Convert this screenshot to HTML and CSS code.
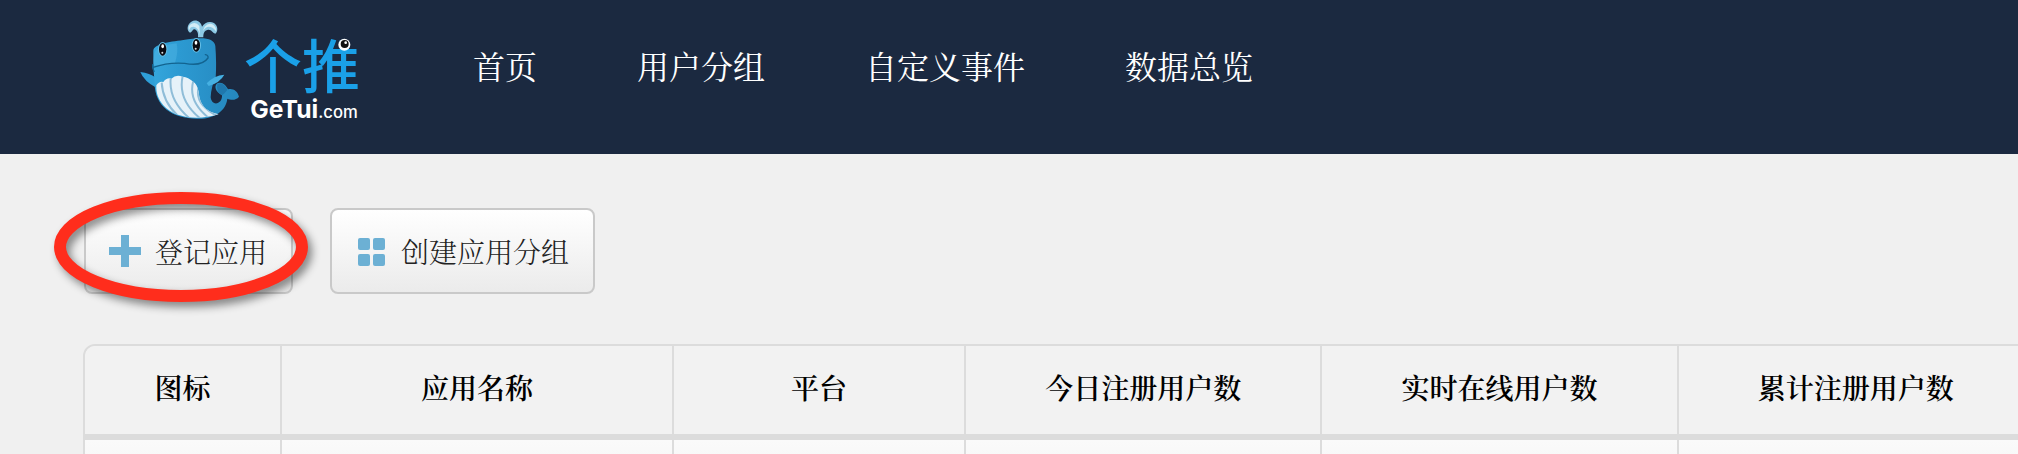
FILE: index.html
```html
<!DOCTYPE html>
<html lang="zh-CN">
<head>
<meta charset="utf-8">
<title>个推</title>
<link rel="stylesheet" href="styles.css">
</head>
<body>
<div class="page">
  <header class="header">
    <a class="logo" href="#" aria-label="个推 GeTui.com">
      <svg class="logo-art" viewBox="0 0 690 300" aria-hidden="true">
        <defs>
          <linearGradient id="skin" x1="0" x2="1" y1="0" y2="0">
            <stop offset="0" stop-color="#35a6dc"/>
            <stop offset=".3" stop-color="#2c9ad2"/>
            <stop offset="1" stop-color="#2587bd"/>
          </linearGradient>
          <clipPath id="belly"><path d="M49 196Q58 182 70 186Q80 172 94 176Q108 162 128 170Q146 172 158 184Q172 192 176 216C180 250 190 272 236 283C170 304 100 292 70 256C54 236 48 220 49 196Z"/></clipPath>
        </defs>
        <path d="M174 52C176 38 170 30 164 28C156 28 158 36 150 38C140 32 140 14 154 5C168 -4 184 6 186 20C194 6 210 2 222 9C234 17 235 34 226 41C216 38 216 28 204 29C192 32 190 40 190 52Z" fill="#8cc8e4"/>
        <path d="M150 14Q166 2 178 18L180 46Q176 22 160 20Q150 20 148 30Q143 22 150 14ZM194 20Q206 6 220 14Q230 22 228 34Q220 20 206 20Q196 20 188 34Z" fill="#d3ecf6"/>
        <path d="M1 156Q30 160 46 172L50 204Q12 184 1 156Z" fill="#2f9fd8"/>
        <path d="M40 92C42 72 84 66 130 60C190 50 222 54 226 78Q230 130 227 174Q214 196 212 232C216 262 248 252 246 226C228 218 220 198 232 190C246 184 258 196 264 208C278 204 292 212 297 230C288 242 272 240 262 236C258 272 224 296 178 296C98 298 44 260 44 190Q38 140 40 92Z" fill="url(#skin)"/>
        <path d="M50 88Q80 72 110 70Q116 96 104 132L42 136Q38 100 50 88Z" fill="#4db4e3" opacity=".5"/>
        <path d="M232 192Q250 184 262 210Q250 224 246 226Q228 216 232 192Z" fill="#1f78ad"/>
        <path d="M39 142Q86 126 134 130Q186 140 204 114Q206 106 196 104M38 134Q36 144 42 154" fill="none" stroke="#12638f" stroke-width="4" stroke-linecap="round"/>
        <path d="M49 196Q58 182 70 186Q80 172 94 176Q108 162 128 170Q146 172 158 184Q172 192 176 216C180 250 190 272 236 283C170 304 100 292 70 256C54 236 48 220 49 196Z" fill="#e6f2f9"/>
        <g clip-path="url(#belly)" fill="none" stroke="#8fbdd8" stroke-width="6">
          <path d="M65 188Q68 244 112 286M92 176Q86 242 150 296M128 168Q112 242 184 298M160 182Q142 246 212 298M176 202Q162 254 236 290"/>
        </g>
        <path d="M200 190Q222 166 253 164Q240 188 206 198Z" fill="#45b0e2"/>
        <ellipse cx="68" cy="88" rx="14" ry="22" fill="#66bfe6"/><ellipse cx="68" cy="88" rx="11" ry="19" fill="#0b0b12"/><ellipse cx="68" cy="79" rx="4" ry="6" fill="#fff"/><circle cx="67" cy="98" r="3" fill="#ddd"/>
        <ellipse cx="169" cy="76" rx="14" ry="22" fill="#66bfe6"/><ellipse cx="169" cy="76" rx="11" ry="19" fill="#0b0b12"/><ellipse cx="168" cy="68" rx="4" ry="6" fill="#fff"/><circle cx="167" cy="86" r="3" fill="#ddd"/>
        <text class="logo-name" x="312" y="203">个推</text>
        <text class="logo-domain" x="331" y="294">GeTui<tspan class="logo-tld">.com</tspan></text>
        <circle cx="613" cy="74" r="18" fill="#fff"/><circle cx="614" cy="72" r="12" fill="#111"/><circle cx="617" cy="68" r="4" fill="#fff"/>
      </svg>
    </a>
    <nav class="nav">
      <a href="#">首页</a>
      <a href="#">用户分组</a>
      <a href="#">自定义事件</a>
      <a href="#">数据总览</a>
    </nav>
  </header>
  <main class="main">
    <div class="toolbar">
      <div class="marked">
        <button class="button" type="button">
          <svg class="icon" viewBox="0 0 32 32" aria-hidden="true"><path d="M12 0h8v12h12v8H20v12h-8V20H0v-8h12z"/></svg>
          登记应用
        </button>
        <svg class="mark" viewBox="0 0 254 110" aria-hidden="true"><ellipse cx="127" cy="55" rx="121" ry="49"/></svg>
      </div>
      <button class="button" type="button">
        <svg class="icon" viewBox="0 0 32 32" aria-hidden="true"><rect x="3" y="3" width="12" height="12" rx="2"/><rect x="18" y="3" width="12" height="12" rx="2"/><rect x="3" y="19" width="12" height="12" rx="2"/><rect x="18" y="19" width="12" height="12" rx="2"/></svg>
        创建应用分组
      </button>
    </div>
    <table class="apps">
      <colgroup><col class="col-icon"><col class="col-name"><col class="col-platform"><col class="col-count"><col class="col-count"><col class="col-count"></colgroup>
      <thead>
        <tr><th scope="col">图标</th><th scope="col">应用名称</th><th scope="col">平台</th><th scope="col">今日注册用户数</th><th scope="col">实时在线用户数</th><th scope="col">累计注册用户数</th></tr>
      </thead>
      <tbody>
        <tr><td></td><td></td><td></td><td></td><td></td><td></td></tr>
      </tbody>
    </table>
  </main>
</div>
</body>
</html>
```
FILE: styles.css
```css
* { box-sizing: border-box; }

body {
  margin: 0;
  background: #f0f0f0;
  color: #222;
  font-family: "Songti SC", "Noto Serif CJK SC", "Noto Sans CJK SC", serif;
  font-size: 28px;
  font-weight: 300;
}

.page {
  height: 100vh;
  overflow: hidden;
}

.header {
  display: flex;
  align-items: flex-start;
  padding: 20px 0 34px 140px;
  background: #1b2940;
}

.logo { display: block; }

.logo-art {
  display: block;
  width: 230px;
  height: 100px;
  overflow: visible;
}

.logo-name {
  fill: #1aa0e8;
  font-family: "Noto Sans CJK SC", sans-serif;
  font-size: 174px;
  font-weight: 500;
}

.logo-domain {
  fill: #fff;
  font-family: Inter, sans-serif;
  font-size: 74px;
  font-weight: 700;
}

.logo-tld {
  font-size: 50px;
  font-weight: 500;
}

.nav {
  display: flex;
  gap: 100px;
  padding-top: 21px;
  margin-left: 103px;
}

.nav a {
  color: #fff;
  font-size: 32px;
  font-weight: 400;
  line-height: 48px;
  text-decoration: none;
  white-space: nowrap;
}

.main { padding: 54px 0 0 84px; }

.toolbar {
  display: flex;
  gap: 37px;
  margin-bottom: 50px;
}

.marked { position: relative; }

.mark {
  position: absolute;
  top: -16px;
  left: -30px;
  width: 254px;
  height: 110px;
  overflow: visible;
  fill: none;
  stroke: #ff2d1c;
  stroke-width: 12;
  filter: drop-shadow(4px 5px 4px rgba(0, 0, 0, 0.45));
  pointer-events: none;
}

.button {
  display: flex;
  align-items: center;
  gap: 14px;
  height: 86px;
  padding: 0 24px 1px 23px;
  border: 2px solid #c9c9c9;
  border-radius: 8px;
  background: linear-gradient(#fff, #ebebeb);
  color: #222;
  font: inherit;
  white-space: nowrap;
}

.icon {
  width: 32px;
  height: 32px;
  fill: #6cb0d4;
}

.apps {
  width: calc(100% + 20px);
  margin-left: -1px;
  table-layout: fixed;
  border: 2px solid #dcdcdc;
  border-radius: 12px 0 0 0;
  border-spacing: 0;
}

.col-icon { width: 197px; }
.col-name { width: 392px; }
.col-platform { width: 292px; }

.apps th {
  height: 94px;
  padding: 0 0 6px;
  border-right: 2px solid #dcdcdc;
  border-bottom: 6px solid #dcdcdc;
  background: #f2f2f2;
  color: #000;
  font-weight: 600;
}

.apps th:first-child { border-top-left-radius: 10px; }

.apps td {
  height: 88px;
  padding: 0;
  border-right: 2px solid #dcdcdc;
  background: linear-gradient(#fafafa, #f0f0f0);
}
```
